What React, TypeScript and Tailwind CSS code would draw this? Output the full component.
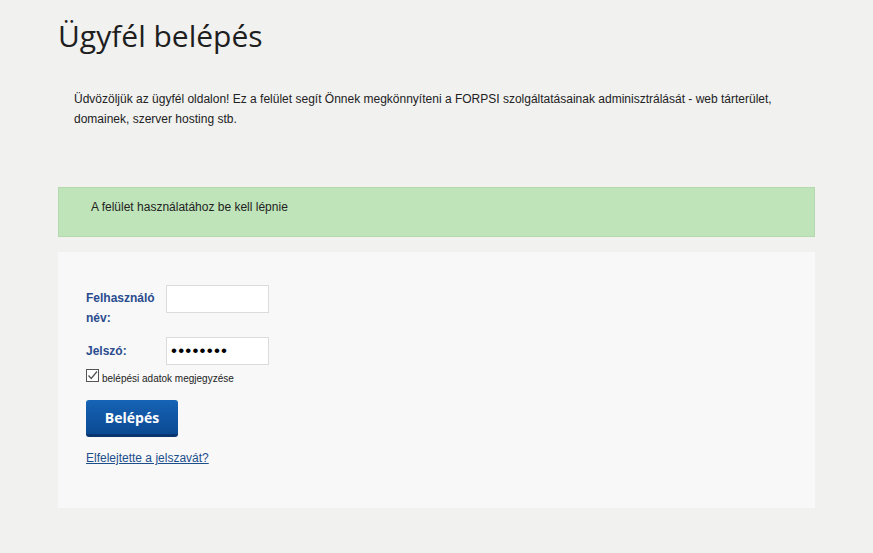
import React, { useState } from "react";

const App = () => {
  const [remember, setRemember] = useState(true);

  return (
    <div className="min-h-[553px] w-[873px] bg-[#f1f1f0] pt-[14px]" style={{ fontFamily: "Arial, 'Liberation Sans', sans-serif" }}>
      <div className="ml-[58px] w-[757px]">
        <h1 className="text-[30px] leading-[44px] text-[#1e1e1e] font-['Open_Sans',sans-serif] font-normal">
          Ügyfél belépés
        </h1>

        <p className="mt-[31px] px-[16px] text-[12px] leading-[20px] text-[#222]">
          Üdvözöljük az ügyfél oldalon! Ez a felület segít Önnek megkönnyíteni a FORPSI szolgáltatásainak adminisztrálását - web tárterület, domainek, szerver hosting stb.
        </p>

        <div className="mt-[58px] h-[50px] border border-[#b4d9ae] bg-[#bfe4b9] pl-[32px] pt-[11px] text-[12px] leading-[16px] text-[#222]">
          A felület használatához be kell lépnie
        </div>

        <div className="mt-[15px] h-[256px] bg-[#f8f8f8] pl-[28px] pt-[33px]">
          <form onSubmit={(e) => e.preventDefault()} autoComplete="off">
            <div className="flex">
              <label className="w-[80px] pt-[3px] text-[12px] font-bold leading-[20px] text-[#2a4c8e]">
                Felhasználó név:
              </label>
              <input className="h-[28px] w-[103px] border border-[#dcdcdc] bg-white outline-0 px-1 text-[12px]" />
            </div>

            <div className="mt-[9px] flex items-center">
              <label className="w-[80px] text-[12px] font-bold leading-[20px] text-[#2a4c8e]">
                Jelszó:
              </label>
              <input
                type="password"
                defaultValue="abcdefgh"
                className="h-[28px] w-[103px] border border-[#dcdcdc] bg-white px-[4px] text-[17px] text-black outline-0 tracking-[1.2px]"
              />
            </div>

            <label className="mt-[4px] flex h-[13px] items-center gap-[3px] text-[10px] text-[#222]">
              <span
                onClick={() => setRemember(!remember)}
                className="flex h-[13px] w-[13px] items-center justify-center border border-[#555] bg-white"
              >
                {remember && (
                  <svg width="11" height="11" viewBox="0 0 11 11">
                    <path d="M1.5 5.5 L4.2 8.5 L10 1.5" fill="none" stroke="#555" strokeWidth="1.3" />
                  </svg>
                )}
              </span>
              <span className="pt-[5px]">belépési adatok megjegyzése</span>
            </label>

            <button
              type="submit"
              className="mt-[18px] h-[37px] w-[92px] rounded-[3px] border-b-[3px] border-[#0a3670] bg-gradient-to-b from-[#1663b5] to-[#0b4a93] font-['Open_Sans',sans-serif] text-[14px] font-bold text-white"
            >
              Belépés
            </button>

            <div className="mt-[13px] leading-[14px]">
              <a href="#" className="text-[12px] text-[#1d4f8c] underline">
                Elfelejtette a jelszavát?
              </a>
            </div>
          </form>
        </div>
      </div>
    </div>
  );
};

export default App;
